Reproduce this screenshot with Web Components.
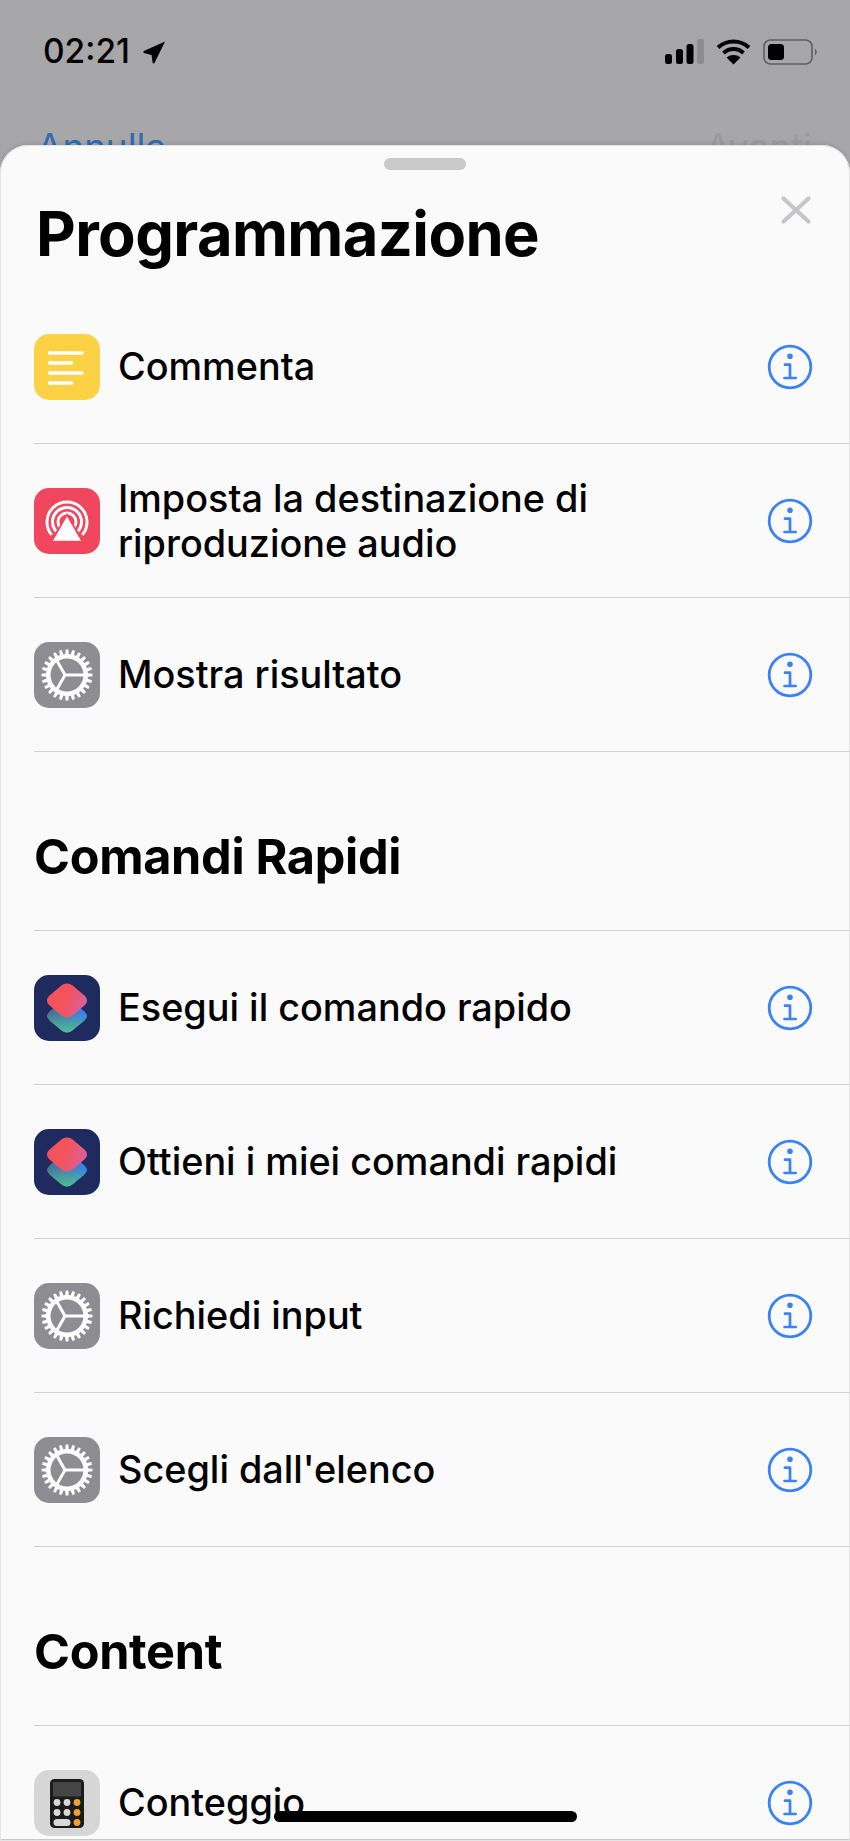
<!DOCTYPE html>
<html lang="it"><head><meta charset="utf-8"><title>Programmazione</title>
<style>
html,body{margin:0;padding:0;width:850px;height:1841px;overflow:hidden;background:#a7a7a9;font-family:Inter,"Liberation Sans",sans-serif;color:#000}
</style></head><body>
<app-screen>
  <status-bar></status-bar>
  <nav-peek></nav-peek>
  <action-sheet heading="Programmazione">
    <action-row icon="note">Commenta</action-row>
    <action-row icon="airplay">Imposta la destinazione di<br>riproduzione audio</action-row>
    <action-row icon="gear">Mostra risultato</action-row>
    <section-head>Comandi Rapidi</section-head>
    <action-row icon="shortcuts">Esegui il comando rapido</action-row>
    <action-row icon="shortcuts">Ottieni i miei comandi rapidi</action-row>
    <action-row icon="gear">Richiedi input</action-row>
    <action-row icon="gear">Scegli dall'elenco</action-row>
    <section-head>Content</section-head>
    <action-row icon="calc">Conteggio</action-row>
  </action-sheet>
  <home-bar></home-bar>
</app-screen>
<script>
function gearPath(){
  let d='';const cx=33,cy=33,n=24,ro=25.5,ri=21;
  for(let i=0;i<n;i++){
    const a=(i/n)*Math.PI*2,w=Math.PI*2/n;
    const pts=[[ri,a-w*.5],[ri,a-w*.32],[ro,a-w*.2],[ro,a+w*.2],[ri,a+w*.32]];
    pts.forEach((p,j)=>{const x=cx+p[0]*Math.cos(p[1]),y=cy+p[0]*Math.sin(p[1]);d+=(i===0&&j===0?'M':'L')+x.toFixed(2)+' '+y.toFixed(2)});
  }
  return d+'Z';
}
let gid=0;
const ICONS={
 note:()=>`<svg viewBox="0 0 66 66" width="66" height="66"><rect width="66" height="66" rx="15" fill="#fbd245"/><g stroke="#fff" stroke-width="3.4" stroke-linecap="round"><path d="M15.5 19H48"/><path d="M15.5 29H37.5"/><path d="M15.5 39H48"/><path d="M15.5 49H37.5"/></g></svg>`,
 airplay:()=>`<svg viewBox="0 0 66 66" width="66" height="66"><rect width="66" height="66" rx="15" fill="#f0475f"/><g fill="none" stroke="#fff" stroke-width="2.9"><path d="M17.7 46.9A20 20 0 1 1 48.3 46.9"/><path d="M21.9 43.3A14.5 14.5 0 1 1 44.1 43.3"/><path d="M26.1 39.8A9 9 0 1 1 39.9 39.8"/></g><path d="M33 28.5L47 52.7H19Z" fill="#fff" stroke="#f0475f" stroke-width="3.6" stroke-linejoin="miter" paint-order="stroke"/></svg>`,
 gear:()=>`<svg viewBox="0 0 66 66" width="66" height="66"><rect width="66" height="66" rx="15" fill="#8e8e92"/><path d="${gearPath()}" fill="#fff"/><circle cx="33" cy="33" r="16.5" fill="#8e8e92"/><g stroke="#fff" stroke-width="3" fill="none"><path d="M31 33H50M31 33L22.5 18M31 33L22.5 48"/></g></svg>`,
 shortcuts:()=>{const i=++gid;return `<svg viewBox="0 0 66 66" width="66" height="66"><defs>
  <linearGradient id="c${i}" gradientUnits="userSpaceOnUse" x1="13" y1="0" x2="53" y2="0"><stop offset="0" stop-color="#4a6f8e"/><stop offset=".55" stop-color="#3f7fc0"/><stop offset="1" stop-color="#3a80f2"/></linearGradient>
  <linearGradient id="g${i}" gradientUnits="userSpaceOnUse" x1="0" y1="58" x2="0" y2="38"><stop offset="0" stop-color="#4fc08c"/><stop offset="1" stop-color="#4fc08c" stop-opacity="0"/></linearGradient>
  <linearGradient id="b${i}" gradientUnits="userSpaceOnUse" x1="13" y1="30" x2="48" y2="12"><stop offset="0" stop-color="#f4535c"/><stop offset=".55" stop-color="#d9609a"/><stop offset="1" stop-color="#c566c4"/></linearGradient>
  <linearGradient id="d${i}" gradientUnits="userSpaceOnUse" x1="30" y1="24" x2="46" y2="38"><stop offset="0" stop-color="#3a3a70" stop-opacity="0"/><stop offset="1" stop-color="#3a3a70" stop-opacity=".55"/></linearGradient></defs>
  <rect width="66" height="66" rx="15" fill="#1f2a5e"/>
  <g id="lo"><path d="M33 24.5Q36 24.5 39 27L50 36Q53 39 53 41T50 46L39 55Q36 57.5 33 57.5T27 55L16 46Q13 43 13 41T16 36L27 27Q30 24.5 33 24.5Z" fill="url(#c${i})"/><path d="M33 24.5Q36 24.5 39 27L50 36Q53 39 53 41T50 46L39 55Q36 57.5 33 57.5T27 55L16 46Q13 43 13 41T16 36L27 27Q30 24.5 33 24.5Z" fill="url(#g${i})"/></g>
  <rect x="-16.5" y="-16.5" width="33" height="33" rx="8" transform="translate(33 25.5) scale(1 .85) rotate(45)" fill="url(#b${i})"/>
  <rect x="-16.5" y="-16.5" width="33" height="33" rx="8" transform="translate(33 25.5) scale(1 .85) rotate(45)" fill="url(#d${i})"/></svg>`},
 calc:()=>`<svg viewBox="0 0 66 66" width="66" height="66"><rect width="66" height="66" rx="15" fill="#d6d6d6"/><rect x="16" y="9" width="34" height="49" rx="4.5" fill="#1b1b1b"/><rect x="19" y="12" width="28" height="14.5" fill="#454545"/><g fill="#d8d8d8"><circle cx="23" cy="32.5" r="3.4"/><circle cx="33" cy="32.5" r="3.4"/><circle cx="23" cy="42.5" r="3.4"/><circle cx="33" cy="42.5" r="3.4"/><rect x="19.5" y="49" width="17" height="7" rx="3.5"/></g><g fill="#f0a030"><circle cx="43" cy="32.5" r="3.4"/><circle cx="43" cy="42.5" r="3.4"/><circle cx="43" cy="52.5" r="3.4"/></g></svg>`
};
function def(name,css,html,extra){
  customElements.define(name,class extends HTMLElement{
    constructor(){super();this.attachShadow({mode:'open'}).innerHTML=`<style>${css}</style>${html}`}
    connectedCallback(){extra&&extra(this)}
  });
}
def('app-screen',':host{display:flex;flex-direction:column;position:relative;width:850px;height:1841px;overflow:hidden;background:#a7a7a9}','<slot></slot>');
def('status-bar',`:host{display:flex;align-items:center;justify-content:space-between;height:103px;box-sizing:border-box;padding:0 31px 0 43px}
 .time{display:flex;align-items:center;gap:12px;font:500 33.5px/1 Inter,sans-serif}
 .r{display:flex;align-items:center;gap:12px}`,
 `<div class="time"><span>02:21</span><svg width="24" height="24" viewBox="0 0 24 25"><path d="M23.5 1.5L12.5 24 Q11 25 10.5 23.5 L9.5 15.5 L1.5 13.5 Q0 12.5 1.5 11.5Z" fill="#000"/></svg></div>
 <div class="r"><svg width="39" height="25" viewBox="0 0 39 25"><rect x="0" y="15" width="7" height="10" rx="2.5"/><rect x="11" y="10" width="7" height="15" rx="2.5"/><rect x="21.5" y="5" width="7" height="20" rx="2.5"/><rect x="32" y="0" width="7" height="25" rx="2" fill="#8d8d8f"/></svg>
 <svg width="35" height="26" viewBox="0 0 35 26"><g fill="none" stroke="#000" stroke-width="4"><path d="M2 8.5C11 .5 24 .5 33 8.5"/><path d="M7.5 14C13.5 8.8 21.5 8.8 27.5 14"/></g><path d="M17.5 25.5L10.5 18.5C14.5 15.2 20.5 15.2 24.5 18.5Z"/></svg>
 <svg width="56" height="26" viewBox="0 0 56 26"><rect x="1" y="1" width="48" height="24" rx="6.5" fill="none" stroke="#5f5f60" stroke-width="1.6"/><rect x="5" y="5" width="16" height="16" rx="3.5"/><path d="M52 9.5Q55.5 13 52 16.5Z" fill="#5f5f60"/></svg></div>`);
def('nav-peek',`:host{display:flex;justify-content:space-between;height:62px;margin-bottom:-20px;box-sizing:border-box;padding:24px 38px 0 37px;font:400 36.8px/40px Inter,sans-serif}
 .a{color:#2f6cb3}.b{color:#9b9b9d}`,'<span class="a">Annulla</span><span class="b">Avanti</span>');
def('action-sheet',`:host{display:block;flex:1;min-height:0;position:relative;z-index:1;background:#fafafa;border-radius:28px 28px 0 0;box-shadow:0 -1px 5px rgba(0,0,0,.12),inset 0 0 0 1px #e4e4e4,inset 0 -2px 0 #c8c8c8}
 .h{width:82px;height:12px;border-radius:6px;background:#c9c9c9;margin:13px auto 0}
 .top{display:flex;justify-content:space-between;align-items:flex-start;padding:0 39px 12px 36px}
 h1{margin:20px 0 0;font:700 61.4px/88px Inter,sans-serif;letter-spacing:-.6px}
 svg{margin-top:26px;flex:none}`,
 `<div class="h"></div><div class="top"><h1 id="t"></h1><svg width="30" height="28" viewBox="0 0 30 28"><path d="M2.5 2.5L27.5 25.5M27.5 2.5L2.5 25.5" stroke="#c6c6c8" stroke-width="4.2" stroke-linecap="round"/></svg></div><slot></slot>`,
 el=>el.shadowRoot.getElementById('t').textContent=el.getAttribute('heading'));
def('section-head',`:host{display:flex;align-items:center;height:179px;box-sizing:border-box;margin-left:34px;border-bottom:1.5px solid #d2d2d4;font:700 48.6px/1 Inter,sans-serif;letter-spacing:-.3px;padding-top:32px}`,'<slot></slot>');
def('action-row',`:host{display:flex;align-items:center;height:154px;box-sizing:border-box;margin-left:34px;border-bottom:1.5px solid #d2d2d4;padding-right:36px;font:500 37.8px/45px Inter,sans-serif}
 .i{width:66px;height:66px;flex:none;display:block}
 .t{flex:1;margin-left:18px}
 .info{flex:none;display:block}`,
 `<span class="i" id="i"></span><span class="t"><slot></slot></span>
 <svg class="info" width="48" height="48" viewBox="0 0 48 48"><circle cx="24" cy="24" r="20.8" fill="none" stroke="#3b82f6" stroke-width="2.8"/><circle cx="24" cy="13.3" r="2.8" fill="#3b82f6"/><path d="M19 21.7H24V35M18.5 35H29.7" fill="none" stroke="#3b82f6" stroke-width="2.7" stroke-linecap="round" stroke-linejoin="round"/></svg>`,
 el=>el.shadowRoot.getElementById('i').innerHTML=ICONS[el.getAttribute('icon')]());
def('home-bar',':host{display:block;position:absolute;z-index:2;left:274px;top:1811px;width:303px;height:11px;border-radius:6px;background:#000}','');
</script>
</body></html>
